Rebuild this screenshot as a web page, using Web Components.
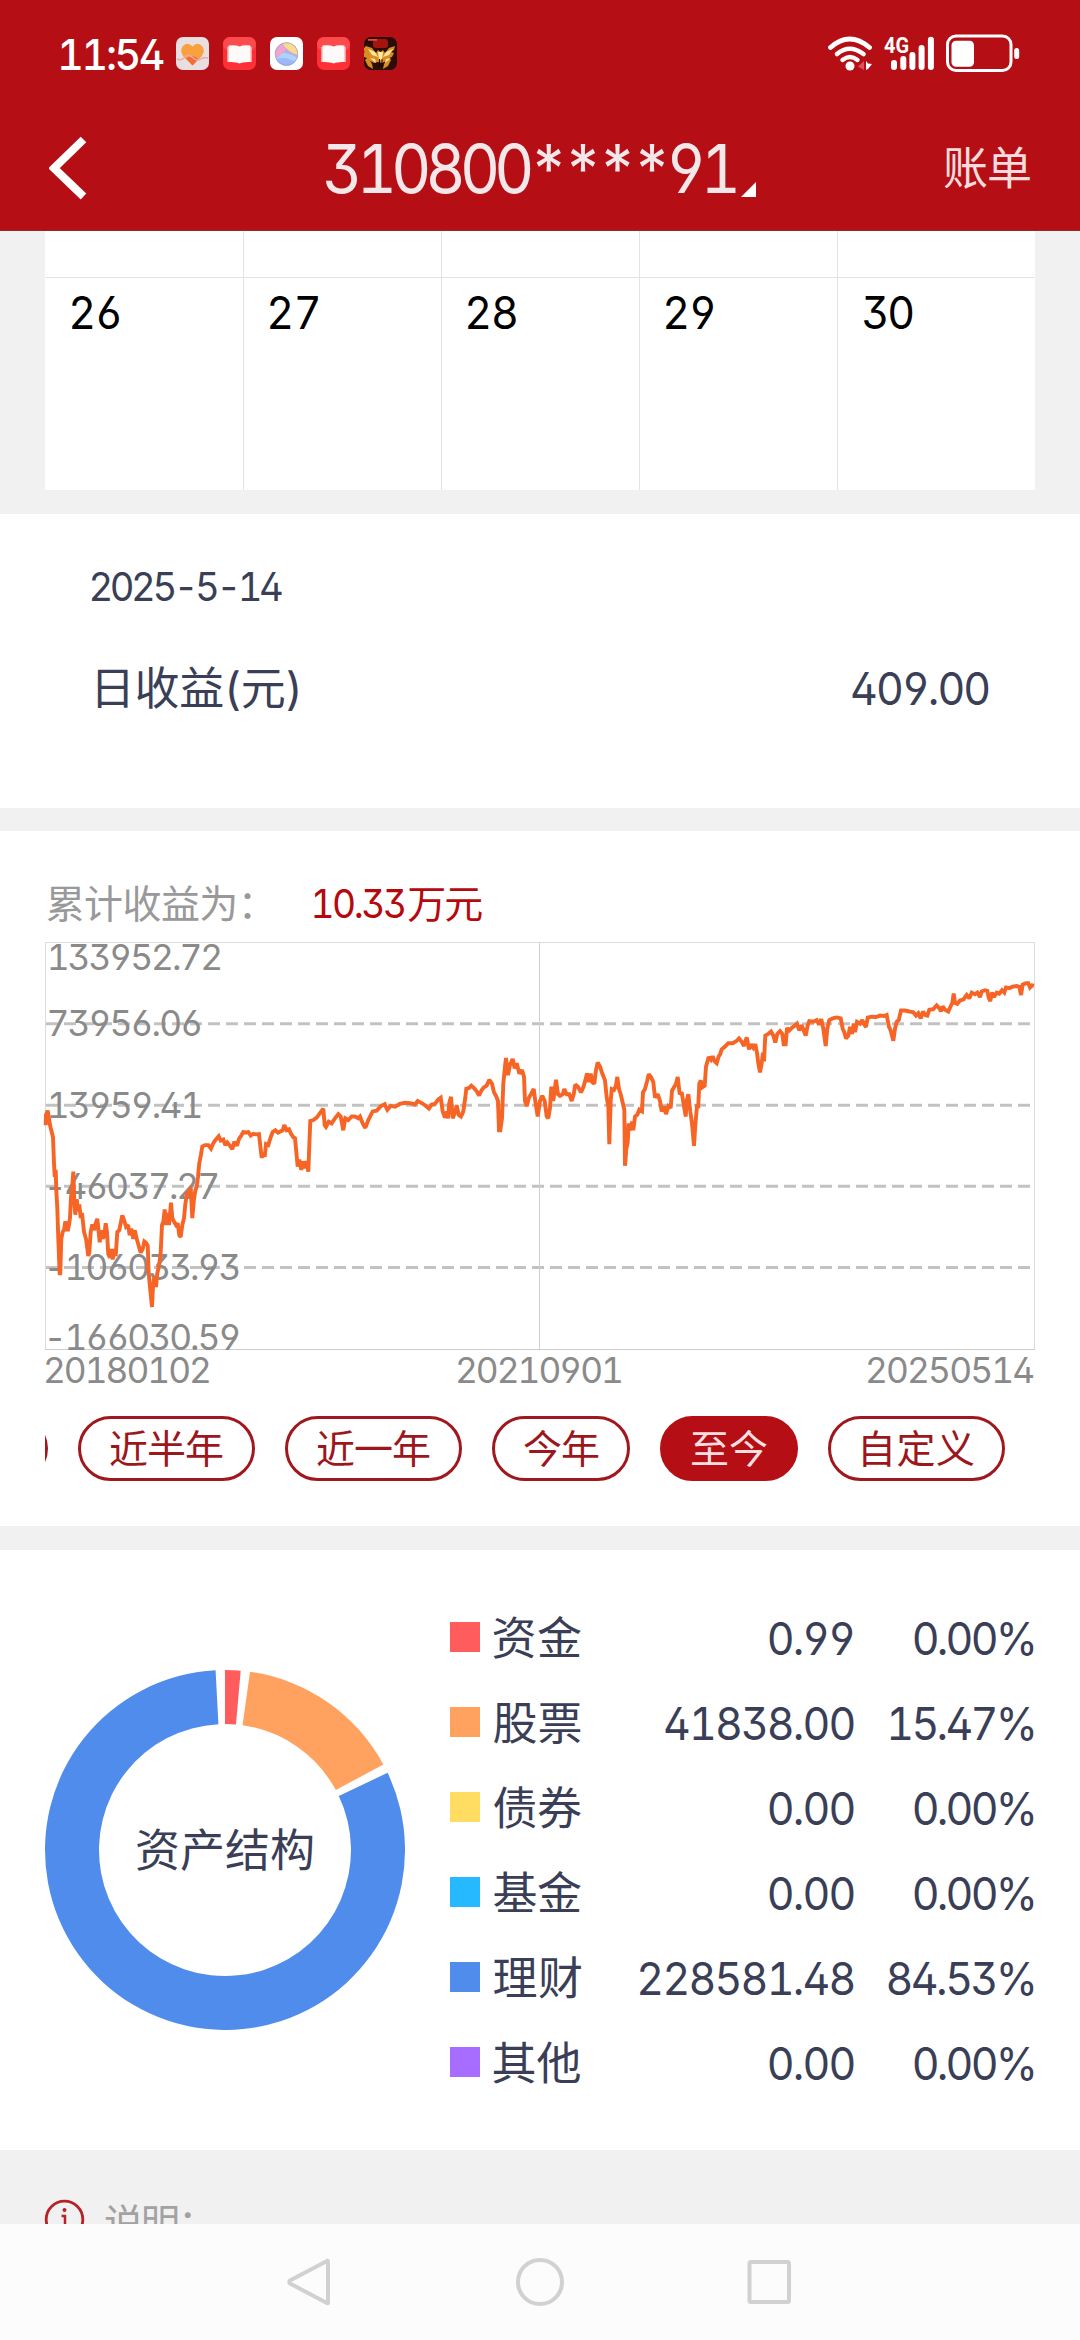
<!DOCTYPE html>
<html lang="zh-CN">
<head>
<meta charset="utf-8">
<title>账单</title>
<style>
html,body{margin:0;padding:0}
body{width:1080px;height:2340px;overflow:hidden;background:#f1f1f1;font-family:Inter,"Noto Sans CJK SC",sans-serif}
</style>
</head>
<body>
<app-screen></app-screen>
<script>
const FONT = 'Inter,"Noto Sans CJK SC",sans-serif';
const FEATURES = '"tnum","ss01"';
const ctx = document.createElement('canvas').getContext('2d');
const ruler = document.createElement('span');
ruler.style.cssText = `position:absolute;visibility:hidden;white-space:nowrap;font-family:${FONT};font-feature-settings:${FEATURES};font-kerning:none`;

/* Left bearing of the first glyph, right bearing of the last one, and the advance of the whole text. */
function measure(text, size, weight) {
  document.body.append(ruler);
  ruler.style.fontSize = size + 'px';
  ruler.style.fontWeight = weight;
  ctx.font = `${weight} ${size}px ${FONT}`;
  const advance = (s) => { ruler.textContent = s; return ruler.getBoundingClientRect().width; };
  const side = (ch) => {
    const m = ctx.measureText(ch), extra = advance(ch) - m.width, lead = ch === '1' ? 0.18 : 0.5;
    return [extra * lead - m.actualBoundingBoxLeft, extra / 2 + m.width - m.actualBoundingBoxRight];
  };
  const out = [side(text[0])[0], side(text[text.length - 1])[1], advance(text)];
  ruler.remove();
  return out;
}

class Base extends HTMLElement {
  constructor() {
    super();
    this.attachShadow({ mode: 'open' }).innerHTML = `<style>*{box-sizing:border-box}${this.css()}</style>${this.html()}`;
  }
  css() { return ':host{display:block}'; }
  html() { return '<slot></slot>'; }
}

/* One line of text trimmed to its cap height and tracked to a given width. */
class InkText extends Base {
  css() {
    return `:host{display:block;flex:none;white-space:nowrap;line-height:.727em;height:.727em;font-feature-settings:${FEATURES};font-kerning:none}span{display:block;transform-origin:0 0}`;
  }
  html() { return '<span><slot></slot></span>'; }
  connectedCallback() {
    const size = +this.getAttribute('size'), w = +this.getAttribute('w'), weight = this.getAttribute('weight') || 400;
    const text = this.textContent;
    const k = /[\u3000-\u9fff]/.test(text) ? 1 : size > 60 ? 0.925 : 0.955;
    this.style.fontSize = size + 'px';
    this.style.fontWeight = weight;
    this.style.width = w + 'px';
    const [l, r, adv] = measure(text, size, weight);
    if (text.length > 1) this.style.letterSpacing = (w / k - (adv - l - r)) / (text.length - 1) + 'px';
    this.style.textIndent = -l + 'px';
    if (k !== 1) this.shadowRoot.querySelector('span').style.transform = `scaleX(${k})`;
  }
}

class StatusBar extends Base {
  css() {
    return `:host{display:flex;height:106px;padding:0 60px 0 60px;align-items:flex-start;color:#fff}
    ink-text{margin-top:38.5px}.apps{display:flex;gap:14px;margin:37px auto 0 12px}.apps svg{width:33px;height:33px}
    .sys{margin-top:30px;width:194px;height:46px}`;
  }
  html() {
    const book = `<svg viewBox="0 0 33 33"><rect width="33" height="33" rx="7" fill="#fc3035"/><rect width="33" height="14" rx="7" fill="#fd4a4c"/><path d="M4 10h25v15q-8-.5-12.500 1.500Q12 24.500 4 25z" fill="#ff9b9b"/><path d="M5.500 8.500q7-1 11 1q4-2 11-1v16.500q-7-.5-11 1.200q-4-1.700-11-1.200z" fill="#fffafa"/></svg>`;
    return `<ink-text size="43" w="103.500" weight="500">11:54</ink-text>
    <div class="apps">
      <svg viewBox="0 0 33 33"><rect width="33" height="33" rx="7" fill="#e9dfe1"/><path d="M16.500 28.500L7 19Q3.500 13 7 9Q12 4.500 16.500 9.500Q21 4.500 26 9Q29.500 13 26 19z" fill="#f9a03f"/><path d="M10 21.500Q17 17 22.500 22L16.500 28.500z" fill="#f36c38"/><path d="M1 22q4 2 7-1q4-5 8-1q5 5 9 2q3-2 7-1" fill="none" stroke="#e8aaa5" stroke-width="1.500"/></svg>
      ${book}
      <svg viewBox="0 0 33 33"><defs><clipPath id="c"><circle cx="16.500" cy="17" r="11.500"/></clipPath></defs><rect width="33" height="33" rx="7" fill="#fff"/><g clip-path="url(#c)"><rect width="33" height="33" fill="#c3a6ea"/><path d="M11 4h20v15q-12-2-20-14z" fill="#f8dc8c"/><path d="M3 18q12-6 26 4v10H3z" fill="#a9d4fb"/><path d="M3 24q10-7 24 2v6H3z" fill="#9db8fa"/><path d="M4 16L11 6l5 7-9 8z" fill="#f2a5cb"/></g><circle cx="16.500" cy="17" r="11.300" fill="none" stroke="#9a9ad6" stroke-width=".7"/></svg>
      ${book}
      <svg viewBox="0 0 33 33"><rect width="33" height="33" rx="7" fill="#2a0d06"/><rect x="9" y="2" width="15" height="9" rx="3" fill="#a3150e"/><path d="M2 9l6 2 4 5 2-3 2.500 2 2.500-2 2 3 4-5 6-2-1 4-3 2 3 1-2 4-3 1 2 2-3 6-5 3 1-5 2-3-4 2-4-1-4 1-4-2 2 3 1 5-5-3-3-6 2-2-3-1-2-4 3-1-3-2z" fill="#d98c22"/><path d="M4 12l7 3 3 5-6-2zM29 12l-7 3-3 5 6-2zM14 15h5l-1 8h-3zM6 21l5 1 1 4zM27 21l-5 1-1 4z" fill="#ffe9a0"/><path d="M15 22h1v8h-1zM17.500 22h1v8h-1z" fill="#1a0603"/><path d="M4 2h9v1.800H4z" fill="#e64a38"/></svg>
    </div>
    <svg class="sys" viewBox="825 30 194 46" fill="none" stroke="#fff" stroke-linecap="round">
      <path d="M829.500 47.500Q848.500 30.500 868.500 47.500" stroke-width="4.800"/><path d="M836 54Q848.500 43.500 862.500 54" stroke-width="4.600"/><path d="M841.500 60Q849 54 856.500 60" stroke-width="4.400"/>
      <circle cx="849" cy="66" r="4.500" fill="#fff" stroke="none"/>
      <path d="M863 61v9l-6-3.500z" fill="#e0525a" stroke="none"/><path d="M865 61l2 2.500 4 .5-4 5-2 1z" fill="#fff" stroke="none"/>
      <text x="883" y="53.200" font-size="22" font-weight="700" font-family="Roboto,sans-serif" fill="#fff" stroke="none" textLength="25" lengthAdjust="spacingAndGlyphs">4G</text>
      <g stroke-width="6"><path d="M893 63v4M902.300 59v8M911.400 55v12M920.600 48v19M929.900 39.700v27.300"/></g>
      <rect x="946.500" y="36" width="63.500" height="34.500" rx="8.500" stroke-width="3"/>
      <rect x="950.500" y="40.700" width="22.500" height="26" rx="4.500" fill="#fff" stroke="none"/>
      <rect x="1013.200" y="48" width="5" height="11" rx="2.500" fill="#fff" stroke="none"/>
    </svg>`;
  }
}

class TitleBar extends Base {
  css() {
    return `:host{display:flex;height:124px;align-items:flex-start;padding:0 50px 0 49px}
    .back{width:38px;height:64px;margin-top:30px}
    .acct{display:flex;align-items:flex-end;height:91px;margin-left:240px;color:#f3e7e9}
    .acct ink-text{margin-bottom:3px}.acct svg{width:15px;height:15px;margin-left:12px}
    .bill{margin:46.500px 0 0 auto;color:#fbdcde}`;
  }
  html() {
    return `<svg class="back" viewBox="0 0 38 64"><path d="M34.500 3.500L5 32.200L34.500 60.500" fill="none" stroke="#fff" stroke-width="8"/></svg>
    <div class="acct"><ink-text size="67" w="401.500">310800****91</ink-text><svg viewBox="0 0 15 15"><path d="M15 0v15H0z" fill="#fff"/></svg></div>
    <ink-text class="bill" size="45" w="86">账单</ink-text>`;
  }
}

class CalendarGrid extends Base {
  css() {
    return `:host{display:block;padding:0 45px;height:284px;border-top:1px solid #8f2b30;background:#f1f1f1}
    .g{display:grid;grid-template:47px 212px/199px repeat(3,198px) 197px;background:#fff}
    .g>div{border-right:1px solid #e3e3e3;border-bottom:1px solid #e3e3e3;padding:18.500px 0 0 27px;color:#000}
    .g>div:nth-child(n+7){padding-left:26px}
    .g>div:nth-child(5n){border-right:0}.g>div:nth-child(n+6){border-bottom:0}`;
  }
  html() {
    return `<div class="g">${'<div></div>'.repeat(5)}${[26, 27, 28, 29, 30].map(d => `<div><ink-text size="45" w="48.500">${d}</ink-text></div>`).join('')}</div>`;
  }
}

class DailyProfit extends Base {
  css() {
    return `:host{display:block;background:#fff;height:294px;padding:58px 91.500px 0;color:#3a3f57}
    .r{display:flex;justify-content:space-between;margin:72px 0 0 5.500px}`;
  }
  html() {
    return `<ink-text size="40" w="190">2025-5-14</ink-text>
    <div class="r"><ink-text size="45" w="201">日收益(元)</ink-text><ink-text size="45" w="136.500">409.00</ink-text></div>`;
  }
}

/* The curve in three consecutive strips, each 360px wide and drawn on a 3:1 grid. */
const S1 = '137,770 138,740 143,728 146,745 150,770 154,785 159,805 162,880 164,920 167,900 169,960 172,1010 175,1100 179,1205 181,1200 184,1100 188,1080 192,1075 196,1050 200,1060 203,1078 207,1060 210,1040 213,980 217,950 220,905 223,990 226,1030 230,985 234,1020 238,1000 242,1040 246,1025 252,1080 258,1100 265,1150 268,1140 272,1080 277,1058 283,1075 287,1055 292,1042 296,1080 299,1110 304,1075 308,1100 313,1090 317,1055 321,1080 325,1145 330,1155 334,1130 338,1160 343,1130 347,1150 352,1080 358,1075 363,1050 367,1032 372,1045 378,1065 384,1060 389,1090 394,1070 400,1100 404,1075 410,1100 416,1120 422,1140 428,1130 433,1108 438,1112 443,1120 446,1200 450,1240 456,1298 459,1240 463,1210 468,1240 472,1200 477,1180 482,1140 486,1060 490,1050 494,1015 498,1060 503,1025 507,1060 513,995 517,1040 522,1050 528,1060 533,1055 538,1090 542,1095 547,1060 552,1040 556,1000 562,965 568,975 572,950 577,1040 582,985 586,960 590,950 594,920 598,880 603,855 607,832 615,828 625,828 633,838 640,822 647,812 656,802 662,815 670,812 676,828 682,820 690,830 697,840 703,818 711,830 717,810 724,800 730,790 738,792 745,790 752,800 760,795 768,797 777,796 781,830 785,865 790,850 794,862 798,825 805,828 812,805 818,790 826,785 834,792 842,788 848,785 853,770 860,785 867,782 873,795 880,805 885,808 890,860 893,890 898,870 904,900 908,875 915,895 920,875 925,905 928,830 931,758 940,755 950,748 960,735 970,722 974,770 978,775 986,760 995,765 1005,750 1015,738 1022,745 1030,785 1036,750 1045,755 1055,745 1065,745 1075,750';
const S2 = '0,745 8,765 16,778 25,755 38,730 50,728 62,715 74,709 82,725 92,714 105,716 120,708 135,705 150,706 165,710 173,700 185,706 195,712 207,722 215,710 225,708 235,695 242,690 248,730 255,748 260,730 264,750 268,705 273,688 278,750 284,735 290,712 296,740 303,745 310,730 316,690 319,664 327,662 334,655 342,662 350,672 357,684 365,668 372,660 380,655 388,638 396,650 402,675 408,685 414,700 417,785 421,785 426,750 430,650 435,600 438,575 444,625 450,595 458,578 464,605 470,590 478,620 486,610 492,630 495,700 500,715 507,690 513,680 521,665 526,700 533,745 540,700 547,685 554,700 560,745 565,750 570,720 574,658 580,700 588,638 594,680 600,685 608,680 613,665 620,680 628,680 635,700 641,680 646,652 655,660 663,675 670,660 676,640 681,620 687,645 692,620 697,645 703,650 708,610 713,588 720,600 727,620 735,640 740,690 745,715 748,825 752,700 755,665 762,668 768,655 772,630 777,665 782,680 788,705 793,725 795,888 799,840 803,820 806,765 811,785 816,760 820,785 825,745 832,740 838,725 846,730 849,675 855,665 862,640 866,622 874,632 880,645 885,690 893,680 900,700 905,730 912,715 918,738 925,715 932,720 936,670 942,660 948,650 953,630 959,680 965,675 971,710 977,745 980,700 985,680 991,730 996,765 1002,830 1006,770 1011,715 1015,715 1018,650 1022,640 1027,660 1034,655 1038,600 1046,572 1053,580 1058,570 1064,585 1070,590 1076,570';
const S3 = '0,565 5,550 15,542 25,532 38,532 50,525 57,518 65,528 72,540 80,515 87,550 93,535 100,545 106,535 111,560 115,590 120,617 125,590 129,560 132,585 136,510 145,505 153,498 160,510 166,530 172,505 180,497 187,505 191,535 197,535 201,488 208,495 215,488 223,482 231,475 238,495 245,480 251,495 257,510 263,480 268,468 280,470 290,465 297,478 304,462 310,490 317,540 322,490 328,465 338,460 350,457 362,460 368,490 373,500 378,518 385,510 390,485 396,505 401,475 405,500 411,470 420,475 427,465 433,478 438,485 443,458 455,455 468,456 480,452 492,453 500,450 507,485 512,495 520,525 525,490 530,470 536,465 543,437 555,437 568,440 580,442 588,452 595,445 602,460 609,440 616,450 622,452 628,435 640,433 650,422 658,430 663,440 668,425 675,435 685,440 692,425 697,415 701,388 705,415 712,418 720,408 730,405 740,392 748,402 755,385 765,390 772,385 780,398 785,382 795,378 802,380 806,400 811,410 816,385 822,398 830,385 838,388 846,378 853,385 858,370 868,372 878,368 890,366 898,368 903,392 908,362 918,358 925,358 930,370 936,364 942,365';
const series = [S1, S2, S3].map((s, i) => s.split(' ').map(p => {
  const [x, y] = p.split(',');
  return (+x / 3 + i * 360).toFixed(1) + ',' + (860 + y / 2.904).toFixed(1);
}).join(' ')).join(' ');

class ProfitChart extends Base {
  css() {
    return `:host{display:block;height:447px}svg{display:block;width:1080px;height:447px}
    text{font-family:${FONT};font-feature-settings:${FEATURES};font-kerning:none;font-size:35.300px;fill:#8a8a8a}`;
  }
  html() {
    const t = [[49.3, 969.8, 171.7, '133952.72'], [49, 1036, 151.7, '73956.06'], [49.3, 1117.6, 147.4, '13959.41'], [49, 1198.8, 168.7, '-46037.27'], [49, 1279.8, 190, '-106033.93'], [49, 1349.7, 190, '-166030.59'], [45.7, 1383, 164, '20180102'], [457.7, 1383, 159.6, '20210901'], [867.7, 1383, 165.6, '20250514']];
    return `<svg viewBox="0 931 1080 447" overflow="visible">
      <g stroke="#c2c2c2" stroke-width="3" stroke-dasharray="12 6">${[1023.8, 1105.2, 1186.3, 1267.5].map(y => `<path d="M46 ${y}H1034"/>`).join('')}</g>
      <path d="M539.500 942V1349" stroke="#cfcfcf"/>
      <rect x="45.500" y="942.500" width="989" height="407" fill="none" stroke="#dcdcdc"/><path d="M45 1349.500H1035" stroke="#cdcdcd"/>
      ${t.map(([x, y, w, s]) => `<text data-x="${x}" y="${y}" data-w="${w}">${s}</text>`).join('')}
      <polyline points="${series}" fill="none" stroke="#f66426" stroke-width="3.900" stroke-linejoin="miter" stroke-miterlimit="2"/>
    </svg>`;
  }
  connectedCallback() {
    this.shadowRoot.querySelectorAll('text').forEach(t => {
      const s = t.textContent, [l, r, adv] = measure(s, 35.3, 400), w = +t.dataset.w;
      t.style.letterSpacing = (w - (adv - l - r)) / (s.length - 1) + 'px';
      t.setAttribute('x', +t.dataset.x - l);
    });
  }
}

class RangePill extends Base {
  css() {
    return `:host{display:block;flex:none;height:65px;border:3px solid #a0181d;border-radius:33px;padding:16px 0 0 29px;color:#9c171c;box-sizing:border-box;width:177px}
    :host([short]){width:138px}:host([wide]){padding-left:32px}:host([active]){background:#b50f15;border-color:#b50f15;color:#fbdfe0}`;
  }
}

class ProfitSection extends Base {
  css() {
    return `:host{display:block;background:#fff;height:695px;margin-top:23px;padding-top:59px}
    .sum{display:flex;height:41px;padding-left:46.700px;color:#999}.sum div{display:flex;gap:4px;margin-left:62px;color:#b5090e}
    .pills{display:flex;gap:30px;height:65px;margin:38px 45px 0;overflow:hidden}
    .pills range-pill:first-child{margin-left:-174px}`;
  }
  html() {
    return `<div class="sum"><ink-text size="39" w="204">累计收益为：</ink-text><div><ink-text size="39" w="91.600">10.33</ink-text><ink-text size="39" w="74">万元</ink-text></div></div>
    <profit-chart></profit-chart>
    <div class="pills"><range-pill></range-pill>
    ${[['近半年', 113], ['近一年', 113], ['今年', 75, 'short'], ['至今', 75, 'short active'], ['自定义', 111, 'wide']].map(([s, w, a]) => `<range-pill ${a || ''}><ink-text size="39" w="${w}">${s}</ink-text></range-pill>`).join('')}</div>`;
  }
}

class DonutChart extends Base {
  css() {
    return `:host{display:grid;width:360px;height:360px;place-items:center}svg,ink-text{grid-area:1/1}svg{width:360px;height:360px}ink-text{color:#3a3f57;margin-top:2px}`;
  }
  html() {
    const p = (r, a) => { a = a * Math.PI / 180; return (180 + r * Math.sin(a)).toFixed(2) + ' ' + (180 - r * Math.cos(a)).toFixed(2); };
    const arc = (a, b, c) => { const f = b - a > 180 ? 1 : 0; return `<path fill="${c}" d="M${p(180, a)}A180 180 0 ${f} 1 ${p(180, b)}L${p(126, b)}A126 126 0 ${f} 0 ${p(126, a)}Z"/>`; };
    return `<svg viewBox="0 0 360 360">${arc(0, 5, '#ff5c5e')}${arc(8, 61.6, '#ffa15f')}${arc(64.6, 357, '#508cec')}</svg><ink-text size="45" w="176">资产结构</ink-text>`;
  }
}

class AssetRow extends Base {
  css() {
    return `:host{display:flex;height:85px;align-items:flex-start;color:#3a3f57}
    i{width:30px;height:30px;background:var(--c)}ink-text{margin-top:.8px}.n{margin-left:13.500px}.v{flex:none;width:273px;margin-left:auto;display:flex;justify-content:flex-end}.p{flex:none;width:180px;display:flex;justify-content:flex-end}`;
  }
  html() { return ''; }
  connectedCallback() {
    const [c, n, nw, v, vw, p, pw] = this.getAttribute('row').split('|');
    this.style.setProperty('--c', c);
    const d = document.createElement('template');
    d.innerHTML = `<i></i><ink-text class="n" size="45" w="${nw}">${n}</ink-text><div class="v"><ink-text size="45" w="${vw}">${v}</ink-text></div><div class="p"><ink-text size="45" w="${pw}">${p}</ink-text></div>`;
    this.shadowRoot.append(d.content);
  }
}

class AssetSection extends Base {
  css() {
    return `:host{display:flex;background:#fff;height:600px;margin-top:24px;padding-left:45px}
    donut-chart{margin-top:120px}.l{margin:72px 0 0 45px;width:584px}`;
  }
  html() {
    return `<donut-chart></donut-chart><div class="l">${['#ff5c5e|资金|87.5|0.99|84.6|0.00%|120', '#ffa15f|股票|87|41838.00|188.6|15.47%|144', '#ffdd63|债券|87.5|0.00|84.6|0.00%|120', '#27b9ff|基金|87.5|0.00|84.6|0.00%|120', '#508cec|理财|87.5|228581.48|214|84.53%|146', '#a66dff|其他|87|0.00|84.6|0.00%|120'].map(r => `<asset-row row="${r}"></asset-row>`).join('')}</div>`;
  }
}

class NoteBar extends Base {
  css() {
    return `:host{display:flex;height:74px;overflow:hidden;background:#f1f1f1;padding:49px 0 0 44px;align-items:flex-start}
    svg{width:41px;height:41px;flex:none}ink-text{margin:10px 0 0 20px;color:#a2a2a2}`;
  }
  html() {
    return `<svg viewBox="0 0 41 41"><circle cx="20.500" cy="20.500" r="18.300" fill="none" stroke="#b52328" stroke-width="2.800"/><circle cx="20.500" cy="11" r="2" fill="#b52328"/><path d="M17.500 17h3.500v13" fill="none" stroke="#b52328" stroke-width="2.500"/></svg><ink-text size="39" w="86">说明：</ink-text>`;
  }
}

class NavBar extends Base {
  css() {
    return `:host{display:flex;height:116px;background:#fcfcfc;padding:34px 287px 0 287px;justify-content:space-between}svg{width:48px;height:48px;fill:none;stroke:#d1d1d1;stroke-width:4}`;
  }
  html() {
    return `<svg viewBox="0 0 48 48"><path d="M41 3.500V44.500Q41 46 39.500 44.800L3 25.500Q1.500 24 3 22.500L39.500 3.200Q41 2 41 3.500z" stroke-linejoin="round"/></svg>
    <svg viewBox="0 0 48 48"><circle cx="24" cy="24" r="22"/></svg>
    <svg viewBox="0 0 48 48"><rect x="4.500" y="4" width="39.500" height="40" rx="1.500"/></svg>`;
  }
}

class AppScreen extends Base {
  css() { return ':host{display:flex;flex-direction:column;width:1080px;height:2340px;overflow:hidden}:host>*{flex:none}header{background:#b50f15;height:230px}'; }
  html() {
    return `<header><status-bar></status-bar><title-bar></title-bar></header><calendar-grid></calendar-grid><daily-profit></daily-profit><profit-section></profit-section><asset-section></asset-section><note-bar></note-bar><nav-bar></nav-bar>`;
  }
}

for (const [n, c] of [['ink-text', InkText], ['status-bar', StatusBar], ['title-bar', TitleBar], ['calendar-grid', CalendarGrid], ['daily-profit', DailyProfit], ['profit-chart', ProfitChart], ['range-pill', RangePill], ['profit-section', ProfitSection], ['donut-chart', DonutChart], ['asset-row', AssetRow], ['asset-section', AssetSection], ['note-bar', NoteBar], ['nav-bar', NavBar], ['app-screen', AppScreen]]) customElements.define(n, c);
</script>
</body>
</html>
